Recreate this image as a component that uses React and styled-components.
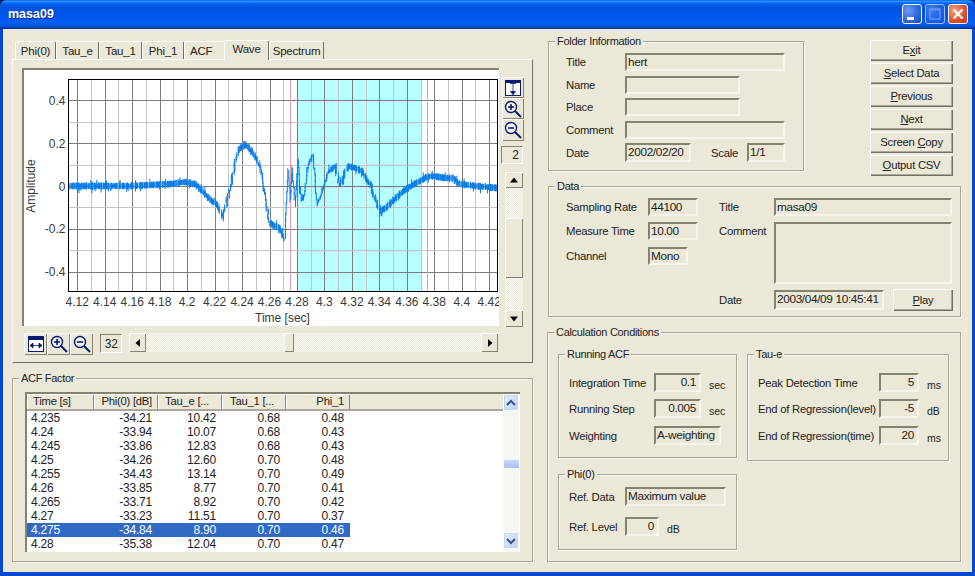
import React from "react";
import styled, { createGlobalStyle } from "styled-components";

const Global = createGlobalStyle`
  html, body { margin: 0; padding: 0; background: #0a246a; }
  body { font-family: "Liberation Sans", Arial, sans-serif; font-size: 11.3px; letter-spacing: -0.25px; color: #222; }
  * { box-sizing: border-box; }
`;

const FACE = "#ebe8d8";

const Window = styled.div`
  width: 975px; height: 576px; display: flex; flex-direction: column; overflow: hidden;
  background: #0847d0; border-radius: 7px 7px 0 0;
`;
const TitleBar = styled.div`
  height: 29px; flex: none; display: flex; align-items: center; justify-content: space-between;
  padding: 0 7px 2px 8px;
  background: linear-gradient(180deg,#0058ee 0,#3593ff 4%,#288eff 6%,#127dff 8%,#036ffc 10%,#0262ee 14%,#0057e5 20%,#0054e3 24%,#0055eb 56%,#005bf5 66%,#0060f5 76%,#0058e6 86%,#0050d0 92%,#0040ab 96%,#003092 100%);
`;
const TitleText = styled.span`
  font: bold 12.5px "Liberation Sans", sans-serif; letter-spacing: 0; color: #fff; text-shadow: 1px 1px 0 #0a2a8a;
`;
const WinButtons = styled.div`display: flex; gap: 3px;`;
const WinButton = styled.div`
  width: 20px; height: 20px; border-radius: 3px; border: 1px solid #fff; overflow: hidden;
  background: ${p => p.$close
    ? "radial-gradient(circle at 30% 30%, #f0a080, #e0552f 55%, #c73512)"
    : "radial-gradient(circle at 30% 30%, #6d9cf5, #2f66e6 55%, #1c49c8)"};
  opacity: ${p => p.$off ? 0.6 : 1};
  svg { display: block; }
`;
const Client = styled.div`
  flex: 1; display: flex; margin: 0 3px 4px 3px; background: ${FACE}; padding-left: 9px; min-height: 0;
`;
const LeftColumn = styled.div`width: 521px; flex: none; padding-top: 11px;`;
const RightColumn = styled.div`width: 413px; flex: none; margin-left: 15px; padding-top: 12px;`;

const Tabs = styled.div`display: flex; height: 19px; padding-left: 3px; align-items: flex-end; position: relative; z-index: 1; font-size: 11.5px; letter-spacing: -0.2px;`;
const Tab = styled.div`
  width: ${p => p.$w}px; height: ${p => p.$active ? 20 : 18}px;
  margin-bottom: ${p => p.$active ? -1 : 0}px;
  padding: ${p => p.$active ? "0 0 3px" : "1px 0 0"} ${p => p.$pl || 0}px;
  display: flex; align-items: center; justify-content: ${p => p.$pl ? "flex-start" : "center"};
  background: ${FACE};
  border-top: 1px solid #fff; border-left: 1px solid #fff;
  border-right: ${p => p.$flat ? "none" : "1px solid #716f64"};
  border-radius: 2px 2px 0 0;
`;
const TabPanel = styled.div`
  height: 304px; padding: 8px 0 0 9px; background: ${FACE};
  border: 1px solid; border-color: #fff #716f64 #716f64 #fff;
`;
const PlotRow = styled.div`display: flex; height: 259px;`;
const PlotArea = styled.div`
  width: 477px; height: 258px; background: #fff;
  border-top: 2px solid #85826f; border-left: 2px solid #85826f;
  svg { display: block; }
`;
const ToolColumn = styled.div`display: flex; flex-direction: column; padding: 9px 0 0 3px; align-items: flex-start;`;
const IconButton = styled.div`
  width: ${p => p.$w || 22}px; height: ${p => p.$h || 21}px; flex: none; display: flex; align-items: center; justify-content: center;
  background: ${FACE};
  box-shadow: inset 1px 1px 0 #fff, inset -1px -1px 0 #85826f;
  svg { display: block; }
`;
const CountBox = styled.div`
  width: ${p => p.$w}px; height: ${p => p.$h}px; margin: ${p => p.$m || 0}; flex: none;
  display: flex; align-items: center; justify-content: flex-end; padding-right: 3px;
  font-size: 12px; letter-spacing: 0;
  border: 1px solid; border-color: #85826f #fff #fff #85826f;
`;
const dither = `
  background-color: #f4f2e8;
  background-image: repeating-conic-gradient(${FACE} 0 25%, #fbfaf4 0 50%);
  background-size: 2px 2px;
`;
const VScroll = styled.div`width: 18px; height: 155px; margin: 8px 0 0 3px; display: flex; flex-direction: column; ${dither}`;
const HScroll = styled.div`width: 369px; height: 19px; margin-left: 7px; display: flex; ${dither}`;
const ArrowButton = styled.div`
  flex: none; width: ${p => p.$w || 18}px; height: ${p => p.$h || 16}px; display: flex; align-items: center; justify-content: center;
  background: ${FACE}; box-shadow: inset 1px 1px 0 #fff, inset -1px -1px 0 #85826f;
`;
const Track = styled.div`flex: ${p => p.$grow ? 1 : "none"}; height: ${p => p.$h ? p.$h + "px" : "auto"}; width: ${p => p.$w ? p.$w + "px" : "auto"};`;
const Thumb = styled.div`
  flex: none; width: ${p => p.$w}px; height: ${p => p.$h}px; background: ${FACE};
  box-shadow: inset 1px 1px 0 #fff, inset -1px -1px 0 #85826f;
`;
const BottomBar = styled.div`display: flex; align-items: flex-start; margin: 6px 0 0 2px;`;

const Group = styled.div`
  position: relative; border: 1px solid #a8a594; box-shadow: 1px 1px 0 #fbfaf2, inset 1px 1px 0 #fbfaf2;
  width: ${p => p.$w}px; height: ${p => p.$h}px;
  padding: ${p => p.$pad || "0"}; flex: none;
  margin: ${p => p.$m || 0};
`;
const Legend = styled.span`
  position: absolute; top: -8px; left: 6px; padding: 0 2px; background: ${FACE}; line-height: 14px; white-space: nowrap;
  font-size: 11px; letter-spacing: -0.3px;
`;
const Row = styled.div`display: flex; align-items: ${p => p.$top ? "flex-start" : "center"}; margin-top: ${p => p.$mt || 0}px;`;
const Label = styled.div`
  width: ${p => p.$w}px; flex: none; white-space: nowrap; line-height: 18px; margin-left: ${p => p.$ml || 0}px;
`;
const Field = styled.div`
  width: ${p => p.$w}px; height: ${p => p.$h || 18}px; flex: none;
  border-top: 2px solid #85826f; border-left: 2px solid #85826f;
  border-right: 2px solid #f7f5ec; border-bottom: 2px solid #f7f5ec;
  padding: 0 ${p => p.$right ? 3 : 0}px 0 ${p => p.$right ? 0 : 1}px;
  text-align: ${p => p.$right ? "right" : "left"};
  line-height: 15px; white-space: nowrap; overflow: hidden; font-size: 11.8px; letter-spacing: -0.35px;
`;
const Unit = styled.span`margin-left: ${p => p.$ml || 8}px; font-size: 10.5px; padding-top: 5px; letter-spacing: -0.1px;`;
const Columns = styled.div`display: flex;`;
const Stack = styled.div`display: flex; flex-direction: column; width: ${p => p.$w ? p.$w + "px" : "auto"}; flex: none;`;

const PushButton = styled.div`
  width: ${p => p.$w || 83}px; height: ${p => p.$h || 21}px; margin: ${p => p.$m || 0}; flex: none; display: flex; align-items: center; justify-content: center;
  background: ${FACE}; white-space: nowrap; padding-bottom: 1px;
  box-shadow: inset 1px 1px 0 #fff, inset -1px -1px 0 #716f64, inset -2px -2px 0 #aca899;
`;
const TopArea = styled.div`display: flex; justify-content: space-between; height: 145px;`;
const ButtonColumn = styled.div`display: flex; flex-direction: column; gap: 2px; margin: -1px 8px 0 0;`;

const ListFrame = styled.div`
  width: 495px; height: 160px; margin: 13px 0 0 12px; display: flex; overflow: hidden; background: #fff;
  border-top: 2px solid #85826f; border-left: 2px solid #85826f;
`;
const ListMain = styled.div`flex: 1; min-width: 0;`;
const HeaderRow = styled.div`display: flex; height: 17px; background: ${FACE}; border-bottom: 2px solid #aca899;`;
const HeaderCell = styled.div`
  width: ${p => p.$w}px; flex: none; line-height: 14px; padding: 0 ${p => p.$right ? 6 : 0}px 0 ${p => p.$pl || 0}px;
  text-align: ${p => p.$right ? "right" : "left"}; white-space: nowrap; overflow: hidden;
  box-shadow: inset 1px 1px 0 #fff, inset -1px 0 0 #85826f;
`;
const DataRow = styled.div`
  display: flex; height: 14px; width: 323px; line-height: 14px; font-size: 12px; letter-spacing: -0.2px;
  background: ${p => p.$sel ? "#316ac5" : "transparent"}; color: ${p => p.$sel ? "#fff" : "#222"};
`;
const DataCell = styled.div`
  width: ${p => p.$w}px; flex: none; padding: 0 ${p => p.$right ? 6 : 0}px 0 ${p => p.$pl || 0}px; text-align: ${p => p.$right ? "right" : "left"};
`;
const ListScroll = styled.div`width: 16px; margin-right: 1px; flex: none; display: flex; flex-direction: column; align-items: center; background: #f6f6f2; padding-bottom: 3px;`;
const XpArrow = styled.div`
  width: 16px; height: 17px; flex: none; border-radius: 2px; display: flex; align-items: center; justify-content: center;
  background: linear-gradient(135deg, #e3ecfd, #bdd0f5); border: 1px solid #fff; box-shadow: 0 0 0 1px #c3d3f5 inset;
`;
const XpThumb = styled.div`
  width: 15px; height: 8px; flex: none; margin-top: ${p => p.$mt}px; border-radius: 1px;
  background: linear-gradient(180deg, #c8d6f6, #a9bff0);
`;
const Spacer = styled.div`flex: 1;`;

const AK = styled.u`text-decoration: underline;`;

/* ---------- chart ---------- */
const T = t => 77.3 + (t - 4.12) * 1373;
const A = a => 186 - a * 214;
const snap = v => Math.round(v) + 0.5;
const KEYS = [[68,186],[100,186],[130,186],[170,184],[185,182],[195,184],[203,191],[210,200],[218,205],[223,218],[229,193],[233,175],[238,150],[245,144],[252,152],[258,161],[263,178],[267,206],[270,223],[275,226],[280,228],[284,239],[286,215],[288,170],[290,200],[292,168],[295,205],[298,160],[301,200],[304,196],[308,165],[313,155],[317,205],[321,196],[328,172],[335,166],[340,185],[345,173],[348,166],[355,168],[362,171],[366,179],[371,186],[376,201],[380,211],[384,209],[390,204],[400,194],[410,186],[420,181],[427,177],[432,176],[445,178],[452,178],[460,184],[475,186],[497,188]];
function makeWave() {
  let a = 0x2f6e2b1;
  const rnd = () => {
    a = (a + 0x6d2b79f5) | 0;
    let t = Math.imul(a ^ (a >>> 15), 1 | a);
    t = (t + Math.imul(t ^ (t >>> 7), 61 | t)) ^ t;
    return ((t ^ (t >>> 14)) >>> 0) / 4294967296;
  };
  const at = x => {
    let k = 0;
    while (k < KEYS.length - 2 && KEYS[k + 1][0] < x) k++;
    const [x0, y0] = KEYS[k], [x1, y1] = KEYS[k + 1];
    return y0 + (y1 - y0) * (x - x0) / (x1 - x0);
  };
  let d = "";
  let prev = at(68.5);
  for (let x = 68.5; x < 497.5; x += 0.5) {
    const y = at(x);
    const busy = x > 285 && x < 330;
    const h = busy ? 1 + rnd() * 1.2 : 2 + rnd() * 1.6;
    const spikeUp = rnd() > 0.93 ? rnd() * (busy ? 5 : 4) : 0;
    const spikeDown = rnd() > 0.93 ? rnd() * (busy ? 5 : 4) : 0;
    const top = Math.min(y - h - spikeUp, prev);
    const bottom = Math.max(y + h + spikeDown, prev);
    const jitter = (rnd() - 0.5) * (busy ? 1 : 2.6);
    d += `M${(x + jitter).toFixed(1)} ${top.toFixed(1)}V${bottom.toFixed(1)}`;
    prev = y;
  }
  return d;
}
const WAVE = makeWave();
const XTICKS = ["4.12","4.14","4.16","4.18","4.2","4.22","4.24","4.26","4.28","4.3","4.32","4.34","4.36","4.38","4.4","4.42"];
const Minor = Array.from({ length: 16 }, (_, i) => 4.13 + i * 0.02);

function Chart() {
  const tick = { fontFamily: '"Liberation Sans", sans-serif', fontSize: 12, fill: "#3a3a3a", letterSpacing: 0 };
  return (
    <svg width="475" height="256" viewBox="24 70 475 256">
      <clipPath id="plotclip"><rect x="68" y="79" width="430" height="212" /></clipPath>
      <rect x="297" y="79" width="125" height="212" fill="#b8ffff" />
      {Minor.map(t => T(t) < 497 && <line key={t} x1={snap(T(t))} x2={snap(T(t))} y1="79" y2="291" stroke="#c4c4c4" />)}
      {XTICKS.map(t => <line key={t} x1={snap(T(+t))} x2={snap(T(+t))} y1="79" y2="291" stroke="#7c7c7c" />)}
      {[0.3, 0.1, -0.1, -0.3].map(a => <line key={a} x1="68" x2="498" y1={snap(A(a))} y2={snap(A(a))} stroke="#c4c4c4" />)}
      {[0.4, 0.2, 0, -0.2, -0.4].map(a => <line key={a} x1="68" x2="498" y1={snap(A(a))} y2={snap(A(a))} stroke="#7c7c7c" />)}
      <line x1="290.5" x2="290.5" y1="79" y2="291" stroke="#e8a0b0" />
      <line x1="427.5" x2="427.5" y1="79" y2="291" stroke="#e8a0b0" />
      <path d={WAVE} fill="none" stroke="#0a7ce8" strokeWidth="1" clipPath="url(#plotclip)" />
      <rect x="68.5" y="79.5" width="429" height="212" fill="none" stroke="#000" />
      {[["0.4",0.4],["0.2",0.2],["0",0],["-0.2",-0.2],["-0.4",-0.4]].map(([s,a]) => (
        <text key={s} x="65.5" y={A(a) + 4.5} textAnchor="end" style={tick}>{s}</text>
      ))}
      {XTICKS.map(t => <text key={t} x={T(+t)} y="306" textAnchor="middle" style={tick}>{t}</text>)}
      <text x="282.5" y="322" textAnchor="middle" style={tick}>Time [sec]</text>
      <text transform="translate(35,186) rotate(-90)" textAnchor="middle" style={tick}>Amplitude</text>
    </svg>
  );
}

const NAVY = "#0a1a6e";
const ZoomIcon = ({ minus }) => (
  <svg width="20" height="20" viewBox="0 0 20 20">
    <circle cx="8" cy="8" r="5.5" fill="#f4f6fb" stroke={NAVY} strokeWidth="1.4" />
    <line x1="5" y1="8" x2="11" y2="8" stroke={NAVY} strokeWidth="1.6" />
    {!minus && <line x1="8" y1="5" x2="8" y2="11" stroke={NAVY} strokeWidth="1.6" />}
    <line x1="12" y1="12" x2="18" y2="18" stroke={NAVY} strokeWidth="2" />
  </svg>
);
const FitH = () => (
  <svg width="16" height="16" viewBox="0 0 16 16">
    <rect x="0.5" y="0.5" width="15" height="15" fill="#fff" stroke={NAVY} />
    <rect x="0" y="0" width="16" height="4" fill={NAVY} />
    <path d="M2 9.5h12M2 9.5l3-2.5v5zM14 9.5l-3-2.5v5z" fill={NAVY} stroke={NAVY} strokeWidth="0.8" />
  </svg>
);
const FitV = () => (
  <svg width="16" height="16" viewBox="0 0 16 16">
    <rect x="0.5" y="0.5" width="15" height="15" fill="#fff" stroke={NAVY} />
    <rect x="0" y="0" width="16" height="3" fill={NAVY} />
    <path d="M8 3.5v11M5 3.5h6M8 14.5l-2.5-3h5z" fill={NAVY} stroke={NAVY} strokeWidth="0.8" />
  </svg>
);
const Tri = ({ dir, color = "#000", size = 8 }) => {
  const d = { up: "M4 1.5L8 6.5H0z", down: "M0 1.5H8L4 6.5z", left: "M6 0V8L1.5 4z", right: "M2 0V8L6.5 4z" }[dir];
  return <svg width={size} height={size} viewBox="0 0 8 8"><path d={d} fill={color} /></svg>;
};
const Chevron = ({ up }) => (
  <svg width="10" height="8" viewBox="0 0 10 8">
    <path d={up ? "M1 6l4-4 4 4" : "M1 2l4 4 4-4"} fill="none" stroke="#35528f" strokeWidth="2" />
  </svg>
);

const TABS = [
  ["Phi(0)", 41], ["Tau_e", 43], ["Tau_1", 43], ["Phi_1", 42], ["ACF", 40, false, true], ["Wave", 45, true], ["Spectrum", 55],
];
const ROWS = [
  ["4.235","-34.21","10.42","0.68","0.48"],["4.24","-33.94","10.07","0.68","0.43"],["4.245","-33.86","12.83","0.68","0.43"],
  ["4.25","-34.26","12.60","0.70","0.48"],["4.255","-34.43","13.14","0.70","0.49"],["4.26","-33.85","8.77","0.70","0.41"],
  ["4.265","-33.71","8.92","0.70","0.42"],["4.27","-33.23","11.51","0.70","0.37"],["4.275","-34.84","8.90","0.70","0.46"],
  ["4.28","-35.38","12.04","0.70","0.47"],
];

export default function App() {
  return (
    <Window>
      <Global />
      <TitleBar>
        <TitleText>masa09</TitleText>
        <WinButtons>
          <WinButton><svg width="18" height="18"><rect x="4" y="12" width="7" height="3" fill="#fff" /></svg></WinButton>
          <WinButton $off><svg width="18" height="18"><rect x="4" y="4" width="10" height="10" fill="none" stroke="#9db8f0" strokeWidth="1.5" /><rect x="4" y="3.5" width="10" height="2" fill="#9db8f0" /></svg></WinButton>
          <WinButton $close><svg width="18" height="18"><path d="M4.5 4.5l9 9M13.5 4.5l-9 9" stroke="#fff" strokeWidth="2.2" /></svg></WinButton>
        </WinButtons>
      </TitleBar>
      <Client>
        <LeftColumn>
          <Tabs>
            {TABS.map(([t, w, active, flat]) => <Tab key={t} $w={w} $active={active} $flat={flat} $pl={flat ? 5 : 0}>{t}</Tab>)}
          </Tabs>
          <TabPanel>
            <PlotRow>
              <PlotArea><Chart /></PlotArea>
              <ToolColumn>
                <IconButton><FitV /></IconButton>
                <IconButton><ZoomIcon /></IconButton>
                <IconButton $h={22}><ZoomIcon minus /></IconButton>
                <CountBox $w={22} $h={18} $m="5px 0 0 -1px">2</CountBox>
                <VScroll>
                  <ArrowButton><Tri dir="up" /></ArrowButton>
                  <Track $h={30} />
                  <Thumb $w={18} $h={60} />
                  <Track $grow />
                  <ArrowButton $h={17}><Tri dir="down" /></ArrowButton>
                </VScroll>
              </ToolColumn>
            </PlotRow>
            <BottomBar>
              <IconButton $w={23} $h={22}><FitH /></IconButton>
              <IconButton $w={23} $h={22}><ZoomIcon /></IconButton>
              <IconButton $w={23} $h={22}><ZoomIcon minus /></IconButton>
              <CountBox $w={22} $h={19} $m="1px 0 0 7px">32</CountBox>
              <HScroll>
                <ArrowButton $w={17} $h={19}><Tri dir="left" /></ArrowButton>
                <Track $w={138} />
                <Thumb $w={10} $h={19} />
                <Track $grow />
                <ArrowButton $w={17} $h={19}><Tri dir="right" /></ArrowButton>
              </HScroll>
            </BottomBar>
          </TabPanel>
          <Group $w={521} $h={184} $m="15px 0 0">
            <Legend>ACF Factor</Legend>
            <ListFrame>
              <ListMain>
                <HeaderRow>
                  <HeaderCell $w={67} $pl={6}>Time [s]</HeaderCell>
                  <HeaderCell $w={64} $right>Phi(0) [dB]</HeaderCell>
                  <HeaderCell $w={64} $pl={7}>Tau_e [...</HeaderCell>
                  <HeaderCell $w={64} $pl={8}>Tau_1 [...</HeaderCell>
                  <HeaderCell $w={64} $right>Phi_1</HeaderCell>
                  <Spacer />
                </HeaderRow>
                {ROWS.map((r, i) => (
                  <DataRow key={r[0]} $sel={i === 8}>
                    <DataCell $w={67} $pl={4}>{r[0]}</DataCell>
                    <DataCell $w={64} $right>{r[1]}</DataCell>
                    <DataCell $w={64} $right>{r[2]}</DataCell>
                    <DataCell $w={64} $right>{r[3]}</DataCell>
                    <DataCell $w={64} $right>{r[4]}</DataCell>
                  </DataRow>
                ))}
              </ListMain>
              <ListScroll>
                <XpArrow><Chevron up /></XpArrow>
                <XpThumb $mt={49} />
                <Spacer />
                <XpArrow><Chevron /></XpArrow>
              </ListScroll>
            </ListFrame>
          </Group>
        </LeftColumn>
        <RightColumn>
          <TopArea>
            <Group $w={256} $h={130} $pad="11px 0 0 17px">
              <Legend>Folder Information</Legend>
              <Row><Label $w={59}>Title</Label><Field $w={160}>hert</Field></Row>
              <Row $mt={5}><Label $w={59}>Name</Label><Field $w={115} /></Row>
              <Row $mt={4}><Label $w={59}>Place</Label><Field $w={115} /></Row>
              <Row $mt={5}><Label $w={59}>Comment</Label><Field $w={160} /></Row>
              <Row $mt={4}>
                <Label $w={59}>Date</Label><Field $w={66} $h={19}>2002/02/20</Field>
                <Label $w={36} $ml={20}>Scale</Label><Field $w={38} $h={19}>1/1</Field>
              </Row>
            </Group>
            <ButtonColumn>
              <PushButton>E<AK>x</AK>it</PushButton>
              <PushButton><span><AK>S</AK>elect Data</span></PushButton>
              <PushButton><span><AK>P</AK>revious</span></PushButton>
              <PushButton><span><AK>N</AK>ext</span></PushButton>
              <PushButton $h={21}><span>Screen <AK>C</AK>opy</span></PushButton>
              <PushButton><span><AK>O</AK>utput CSV</span></PushButton>
            </ButtonColumn>
          </TopArea>
          <Group $w={413} $h={131} $pad="11px 0 0 17px">
            <Legend>Data</Legend>
            <Columns>
              <Stack $w={153}>
                <Row><Label $w={82}>Sampling Rate</Label><Field $w={50}>44100</Field></Row>
                <Row $mt={6}><Label $w={82}>Measure Time</Label><Field $w={50}>10.00</Field></Row>
                <Row $mt={7}><Label $w={82}>Channel</Label><Field $w={40}>Mono</Field></Row>
              </Stack>
              <Stack>
                <Row><Label $w={55}>Title</Label><Field $w={178}>masa09</Field></Row>
                <Row $mt={6} $top><Label $w={55}>Comment</Label><Field $w={178} $h={62} /></Row>
                <Row $mt={5}>
                  <Label $w={55}>Date</Label><Field $w={110} $h={20}>2003/04/09 10:45:41</Field>
                  <PushButton $w={60} $h={22} $m="0 0 0 9px"><span><AK>P</AK>lay</span></PushButton>
                </Row>
              </Stack>
            </Columns>
          </Group>
          <Group $w={414} $h={230} $m="15px 0 0 -1px" $pad="21px 0 0 10px">
            <Legend>Calculation Conditions</Legend>
            <Columns>
              <Stack $w={179}>
                <Group $w={179} $h={104} $pad="18px 0 0 10px">
                  <Legend>Running ACF</Legend>
                  <Row><Label $w={85}>Integration Time</Label><Field $w={47} $h={19} $right>0.1</Field><Unit>sec</Unit></Row>
                  <Row $mt={7}><Label $w={85}>Running Step</Label><Field $w={47} $h={19} $right>0.005</Field><Unit>sec</Unit></Row>
                  <Row $mt={8}><Label $w={85}>Weighting</Label><Field $w={67} $h={19}>A-weighting</Field></Row>
                </Group>
                <Group $w={179} $h={76} $m="16px 0 0" $pad="12px 0 0 10px">
                  <Legend>Phi(0)</Legend>
                  <Row><Label $w={56}>Ref. Data</Label><Field $w={101} $h={19}>Maximum value</Field></Row>
                  <Row $mt={11}><Label $w={56}>Ref. Level</Label><Field $w={34} $h={19} $right>0</Field><Unit>dB</Unit></Row>
                </Group>
              </Stack>
              <Group $w={202} $h={107} $m="0 0 0 10px" $pad="18px 0 0 10px">
                <Legend>Tau-e</Legend>
                <Row><Label $w={121}>Peak Detection Time</Label><Field $w={40} $h={19} $right>5</Field><Unit>ms</Unit></Row>
                <Row $mt={7}><Label $w={121}>End of Regression(level)</Label><Field $w={40} $h={19} $right>-5</Field><Unit>dB</Unit></Row>
                <Row $mt={8}><Label $w={121}>End of Regression(time)</Label><Field $w={40} $h={19} $right>20</Field><Unit>ms</Unit></Row>
              </Group>
            </Columns>
          </Group>
        </RightColumn>
      </Client>
    </Window>
  );
}
